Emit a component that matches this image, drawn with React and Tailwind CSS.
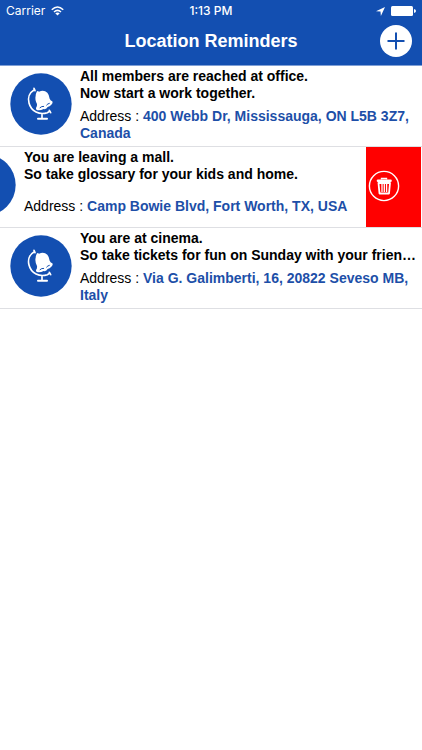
import React from "react";

const reminders = [
  {
    id: 1,
    title: "All members are reached at office.",
    note: "Now start a work together.",
    address: "400 Webb Dr, Mississauga, ON L5B 3Z7, Canada",
  },
  {
    id: 2,
    title: "You are leaving a mall.",
    note: "So take glossary for your kids and home.",
    address: "Camp Bowie Blvd, Fort Worth, TX, USA",
    swiped: true,
  },
  {
    id: 3,
    title: "You are at cinema.",
    note: "So take tickets for fun on Sunday with your friends.",
    address: "Via G. Galimberti, 16, 20822 Seveso MB, Italy",
  },
];

function WifiIcon() {
  return (
    <svg viewBox="0 0 26 20" className="h-[10px] w-[13px]" fill="none" stroke="white" strokeWidth="3" aria-hidden="true">
      <path d="M1.5 7.5Q13-3.5 24.500 7.500" />
      <path d="M6 12Q13 5.500 20 12" />
      <path d="M13 19l-4.500-4.500Q13 11 17.500 14.500Z" fill="white" stroke="none" />
    </svg>
  );
}

function StatusBar() {
  return (
    <div className="grid h-5 grid-cols-3 items-center px-[6px] pt-[2px] text-[12px] leading-4 font-[Inter,sans-serif]">
      <div className="flex items-center gap-[6px]">
        <span>Carrier</span>
        <WifiIcon />
      </div>
      <div className="text-center font-medium">1:13 PM</div>
      <div className="flex items-center justify-end gap-[6px]">
        <svg viewBox="0 0 24 24" className="h-[9px] w-[9px]" fill="white" aria-hidden="true">
          <path d="M24 0L13 24L12 12L0 11Z" />
        </svg>
        <svg viewBox="0 0 25 10" className="h-[10px] w-[25px]" fill="white" aria-hidden="true">
          <rect width="22" height="10" rx="1.500" />
          <path d="M23 3Q25 3.500 25 5T23 7Z" />
        </svg>
      </div>
    </div>
  );
}

function BellGlobe() {
  return (
    <svg viewBox="-15 -21 186 186" className="h-[62px] w-[62px] shrink-0" aria-hidden="true">
      <circle cx="78" cy="72" r="92" fill="#134fb1" />
      <g fill="none" stroke="white" strokeWidth="5" strokeLinecap="round">
        <path d="M57 30C43 38 38 54 42 69C48 94 74 106 97 98L104 94" />
        <path d="M57 25L60 32" />
        <path d="M103 91L107 98" />
        <path d="M81 104V114" />
        <path d="M69 116H96" strokeWidth="6" />
      </g>
      <path
        d="M64 38Q66 30 72 35Q87 29 97 38Q103 45 104 56Q107 62 112 64Q115 69 109 74Q104 79 98 81Q94 89 86 87Q79 91 71 91Q62 91 63 84Q67 79 66 72Q59 58 62 47Q62 42 64 38Z"
        fill="white"
      />
      <path d="M75 83Q80 78 86 79M95 75Q98 71 103 70" fill="none" stroke="#134fb1" strokeWidth="3" strokeLinecap="round" />
    </svg>
  );
}

function DeleteButton() {
  return (
    <button type="button" aria-label="Delete reminder" className="mr-px flex w-[55px] shrink-0 items-center bg-[#ff0000] pb-[2px] pl-[2px]">
      <svg viewBox="0 0 32 32" className="h-8 w-8" fill="none" stroke="white" aria-hidden="true">
        <circle cx="16" cy="16" r="14.600" strokeWidth="1.400" />
        <path d="M13.500 9.500V8.500H18.500V9.500" strokeWidth="1.400" />
        <path d="M10 10.800H22.500" strokeWidth="2.600" strokeLinecap="round" />
        <path d="M10.500 13H22L21 23.500H11.500Z" strokeWidth="1.800" strokeLinejoin="round" />
        <path d="M14 14V22M16.300 14V22M18.600 14V22" strokeWidth="1.300" />
      </svg>
    </button>
  );
}

function ReminderRow({ item }) {
  return (
    <li className="flex min-h-[81px] overflow-hidden border-b border-[#dedfe3]">
      <div className={item.swiped ? "-ml-14 flex min-w-0 flex-1 gap-2 pl-[10px]" : "flex min-w-0 flex-1 gap-2 pl-[10px]"}>
        <div className="flex shrink-0 items-center pb-[4px]">
          <BellGlobe />
        </div>
        <div className="flex min-w-0 flex-1 flex-col pt-[2px] leading-[17px]">
          <h2 className="truncate text-[14px] font-bold">{item.title}</h2>
          <p className="truncate text-[14px] font-bold">{item.note}</p>
          <p className="mt-[6px] flex min-h-[34px] flex-col justify-center text-[14px]">
            <span>
              Address : <b className="text-[#1d4fa8]">{item.address}</b>
            </span>
          </p>
        </div>
      </div>
      {item.swiped && <DeleteButton />}
    </li>
  );
}

export default function App() {
  return (
    <div className="min-h-screen bg-white font-['Liberation_Sans',Arial,sans-serif] text-black">
      <header className="border-b border-[#7f9fd6] bg-[#134fb1] text-white">
        <StatusBar />
        <div className="grid h-[45px] grid-cols-[40px_1fr_40px] items-center px-[10px] pb-[3px]">
          <h1 className="col-start-2 text-center text-[18px] leading-6 font-bold">Location Reminders</h1>
          <button type="button" aria-label="Add reminder" className="flex h-8 w-8 items-center justify-center justify-self-end rounded-full bg-white">
            <svg viewBox="0 0 18 18" className="h-[18px] w-[18px]" stroke="#134fb1" strokeWidth="2" aria-hidden="true">
              <path d="M9 0.500V17.500M0.500 9H17.500" />
            </svg>
          </button>
        </div>
      </header>
      <main>
        <ul>
          {reminders.map((item) => (
            <ReminderRow key={item.id} item={item} />
          ))}
        </ul>
      </main>
    </div>
  );
}
